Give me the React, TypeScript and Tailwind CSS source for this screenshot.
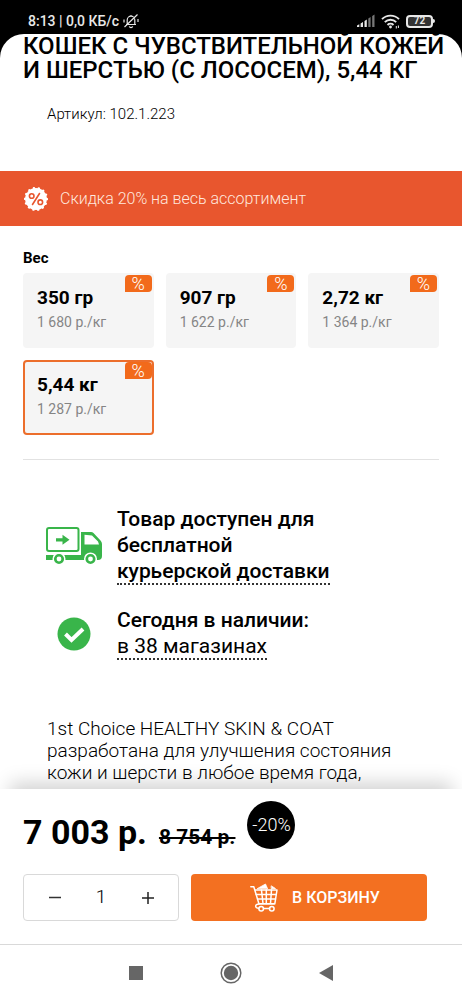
import React, { useState } from 'react';

interface Weight {
  id: string;
  label: string;
  unitPrice: string;
}

const weights: Weight[] = [
  { id: '350', label: '350 гр', unitPrice: '1 680 р./кг' },
  { id: '907', label: '907 гр', unitPrice: '1 622 р./кг' },
  { id: '2720', label: '2,72 кг', unitPrice: '1 364 р./кг' },
  { id: '5440', label: '5,44 кг', unitPrice: '1 287 р./кг' }
];

function StatusBar() {
  return (
    <div className="flex h-[34px] items-center justify-between pl-7 pr-[27px] pt-2 text-[#e8e8e8]">
      <div className="flex items-center gap-1">
        <span className="text-sm font-medium">8:13 | 0,0 КБ/с</span>
        <svg className="h-4 w-4" viewBox="0 0 16 16" fill="none" stroke="currentColor" strokeWidth="1.2">
          <path d="M3 11.5h10M4.2 11.5V7a3.8 3.8 0 0 1 7.6 0v4.5M8 3.2V2M6.3 13.4a1.8 1.8 0 0 0 3.4 0M1.5 14L14.5 1.5M1 6.5v3M15 6v3" />
        </svg>
      </div>
      <div className="flex items-center gap-[6px]">
        <svg className="h-[14px] w-[18px]" viewBox="0 0 18 14">
          <path d="M0 11.5l2.3-1.2V13H0zM3.6 9.5L6 8v5H3.6zM7.5 7l2.3-1.5V13H7.5z" fill="#e8e8e8" />
          <path d="M11.3 4.5L13.6 3v10h-2.3zM15.2 2l2.3-1.5V13h-2.3z" fill="#777" />
        </svg>
        <svg className="h-[15px] w-[19px]" viewBox="0 0 19 15" fill="none" stroke="currentColor" strokeWidth="1.9">
          <path d="M1 5.2a12 12 0 0 1 17 0M3.8 8.2a8 8 0 0 1 11.4 0M6.5 11a4.3 4.3 0 0 1 6 0" />
          <circle cx="9.5" cy="13" r="1.4" fill="currentColor" stroke="none" />
          <path d="M15.3 14.5v-2.5M17.4 11.5v2.5" strokeWidth="1" />
        </svg>
        <div className="flex items-center">
          <div className="flex h-[13px] w-[27px] items-center justify-center rounded border-2 border-[#e8e8e8] bg-[#333] text-[10px] font-bold leading-none">
            72
          </div>
          <div className="h-1 w-[2px] rounded-r bg-[#e8e8e8]" />
        </div>
      </div>
    </div>
  );
}

function DiscountSeal() {
  return (
    <svg className="h-6 w-6 shrink-0" viewBox="0 0 24 24">
      <circle cx="12" cy="12" r="10.9" fill="#fff" />
      <circle cx="12" cy="12" r="10.9" fill="none" stroke="#fff" strokeWidth="2.4" strokeLinecap="round" strokeDasharray="0.1 4.791" />
      <g fill="none" stroke="#e8562e" strokeWidth="1.6" strokeLinecap="round">
        <circle cx="7.7" cy="9" r="2.3" />
        <circle cx="16.3" cy="15.2" r="2.3" />
        <path d="M15.5 6.5L8.5 17.5" />
      </g>
    </svg>
  );
}

function TruckIcon() {
  return (
    <svg className="h-[38px] w-14" viewBox="0 0 56 38">
      <rect x="1" y="1" width="31.5" height="23" rx="2" fill="none" stroke="#39b54a" strokeWidth="2" />
      <path d="M10 11.2h6.5V7.8l7 5-7 5v-3.4H10z" fill="#39b54a" />
      <path
        fillRule="evenodd"
        d="M0 28h35V5h10q1.5 0 2.5 1l7 7.5q1.5 1.5 1.5 3.5v12q0 4-4 4h-52zM38.5 7.8v9.7h14.5l-1-3-6-6z"
        fill="#39b54a"
      />
      <g fill="#39b54a" stroke="#fff" strokeWidth="1.5">
        <circle cx="13" cy="32" r="5.8" />
        <circle cx="44.5" cy="32" r="5.8" />
      </g>
      <circle cx="13" cy="32" r="2.4" fill="#fff" />
      <circle cx="44.5" cy="32" r="2.4" fill="#fff" />
    </svg>
  );
}

function CartIcon() {
  return (
    <svg className="h-[29px] w-7" viewBox="0 0 28 29" fill="none" stroke="#fff" strokeWidth="1.5" strokeLinecap="round" strokeLinejoin="round">
      <path d="M0.8 3.8h3L9 21h15.5M5 7h22l-2.2 13.8H9" />
      <path d="M6.2 11.5h20M7.5 16h18M11.5 7l1.5 13.5M16.3 7v13.5M21.5 7l-1 13.5" />
      <path d="M9 21c-2 0-3.5 1-3.3 2.5.2 1.5 1.3 1.8 3 1.8M13.5 25.5h6" />
      <circle cx="11.2" cy="25.8" r="2.3" />
      <circle cx="21.8" cy="25.8" r="2.3" />
      <path d="M7.5 5.5L15.5 1l2 4.5zM21.5 3l4 2.5h-4z" fill="#fff" strokeWidth="0.8" />
    </svg>
  );
}

function PercentBadge() {
  return (
    <span className="absolute right-0 top-0 flex h-[17px] w-[27px] items-center justify-center rounded rounded-bl-none bg-[#f26a1b] text-lg font-light leading-none text-white">
      %
    </span>
  );
}

export default function App() {
  const [selected, setSelected] = useState('5440');
  const [count, setCount] = useState(1);

  return (
    <div className="flex min-h-screen flex-col bg-black font-[Roboto,'Noto_Sans',sans-serif] text-black">
      <StatusBar />
      <main className="flex-1 rounded-t-[24px] bg-white">
        <h1 className="pl-[23px] pr-3 text-2xl font-medium leading-6">
          КОШЕК С ЧУВСТВИТЕЛЬНОЙ КОЖЕЙ И ШЕРСТЬЮ (С ЛОСОСЕМ), 5,44 КГ
        </h1>
        <p className="px-[47px] pb-[45px] pt-5 text-[15px] font-light leading-6">Артикул: 102.1.223</p>

        <div className="flex h-[55px] items-center gap-3 bg-[#e8562e] px-6 text-base font-light text-[#ffe8df]">
          <DiscountSeal />
          <p>Скидка 20% на весь ассортимент</p>
        </div>

        <fieldset className="mt-[22px] px-[23px]">
          <legend className="pb-[5px] text-[15px] font-bold leading-5">Вес</legend>
          <div className="grid grid-cols-3 gap-3">
            {weights.map((weight) => (
              <label
                key={weight.id}
                className={`relative h-[75px] cursor-pointer rounded border-2 bg-[#f5f5f5] px-3 pt-[11px] ${
                  selected === weight.id ? 'border-[#ec6e2c]' : 'border-[#f5f5f5]'
                }`}
              >
                <input
                  type="radio"
                  name="weight"
                  value={weight.id}
                  checked={selected === weight.id}
                  onChange={() => setSelected(weight.id)}
                  className="sr-only"
                />
                <span className="block text-[19px] font-bold leading-6">{weight.label}</span>
                <span className="block text-sm leading-6 text-[#858585]">{weight.unitPrice}</span>
                <PercentBadge />
              </label>
            ))}
          </div>
        </fieldset>

        <hr className="mx-[23px] mt-6 border-[#e2e2e2]" />

        <section className="flex flex-col gap-[22px] pl-[46px] pr-24 pt-[46px] text-[21px] font-medium leading-[26px]">
          <div className="flex items-center gap-[15px]">
            <div className="w-14 shrink-0">
              <TruckIcon />
            </div>
            <p>
              Товар доступен для бесплатной{' '}
              <a href="#delivery" className="inline-block border-b-2 border-dotted border-[#333] leading-6">
                курьерской доставки
              </a>
            </p>
          </div>
          <div className="flex items-center gap-[15px]">
            <div className="flex w-14 shrink-0 justify-center">
              <svg className="h-[34px] w-[34px]" viewBox="0 0 34 34">
                <circle cx="17" cy="17" r="16.5" fill="#39b54a" />
                <path d="M8.5 17l6 6L26 12" fill="none" stroke="#fff" strokeWidth="4" />
              </svg>
            </div>
            <p>
              Сегодня в наличии:
              <br />
              <a href="#stores" className="inline-block border-b-2 border-dotted border-[#333] font-normal leading-6">
                в 38 магазинах
              </a>
            </p>
          </div>
        </section>

        <p className="px-[47px] pt-[58px] text-[19px] font-light leading-[22px]">
          1st Choice HEALTHY SKIN & COAT разработана для улучшения состояния кожи и шерсти в любое время года,
        </p>
      </main>

      <footer className="sticky bottom-0 bg-white">
        <div className="border-b border-[#d9d9d9] bg-white pb-[23px] pl-[23px] pr-[35px] pt-3 shadow-[0_-16px_18px_-10px_rgba(0,0,0,0.18)]">
          <div className="flex">
            <strong className="pt-[13px] text-[34px] font-bold leading-[36px]">7 003 р.</strong>
            <s className="pl-3 pt-6 text-[21px] font-bold leading-6">8 754 р.</s>
            <span className="ml-3 flex h-12 w-12 items-center justify-center rounded-full bg-black text-lg font-light text-white">
              -20%
            </span>
          </div>
          <div className="flex gap-3 pt-6">
            <div className="flex h-[47px] w-[156px] items-center rounded border border-[#d9d9d9]">
              <button
                aria-label="Уменьшить"
                onClick={() => setCount(Math.max(1, count - 1))}
                className="flex h-full w-[62px] items-center justify-center"
              >
                <svg className="h-3 w-3" viewBox="0 0 12 12" stroke="#333" strokeWidth="1.5">
                  <path d="M0 5.5h12" />
                </svg>
              </button>
              <input
                type="text"
                inputMode="numeric"
                aria-label="Количество"
                value={count}
                onChange={(e) => setCount(Number(e.target.value) || 1)}
                className="w-8 bg-transparent text-center text-[19px] font-light outline-none"
              />
              <button
                aria-label="Увеличить"
                onClick={() => setCount(count + 1)}
                className="flex h-full w-[62px] items-center justify-center"
              >
                <svg className="h-3 w-3" viewBox="0 0 12 12" stroke="#222" strokeWidth="1.5">
                  <path d="M0 6h12M6 0v12" />
                </svg>
              </button>
            </div>
            <button className="flex h-[47px] flex-1 items-center justify-center gap-[14px] rounded bg-[#f37021] pl-3 text-base font-medium text-white">
              <CartIcon />
              В КОРЗИНУ
            </button>
          </div>
        </div>
        <nav className="flex h-[55px] items-center justify-center gap-[77px] text-[#666]">
          <button aria-label="Недавние">
            <svg className="h-[14px] w-[14px]" viewBox="0 0 14 14">
              <path d="M0 0h14v14H0z" fill="currentColor" />
            </svg>
          </button>
          <button aria-label="Домой">
            <svg className="h-[22px] w-[22px]" viewBox="0 0 22 22">
              <circle cx="11" cy="11" r="9.8" fill="none" stroke="currentColor" strokeWidth="1.5" />
              <circle cx="11" cy="11" r="7.2" fill="currentColor" />
            </svg>
          </button>
          <button aria-label="Назад">
            <svg className="h-4 w-[14px]" viewBox="0 0 14 16">
              <path d="M14 0v16L0 8z" fill="currentColor" />
            </svg>
          </button>
        </nav>
      </footer>
    </div>
  );
}
